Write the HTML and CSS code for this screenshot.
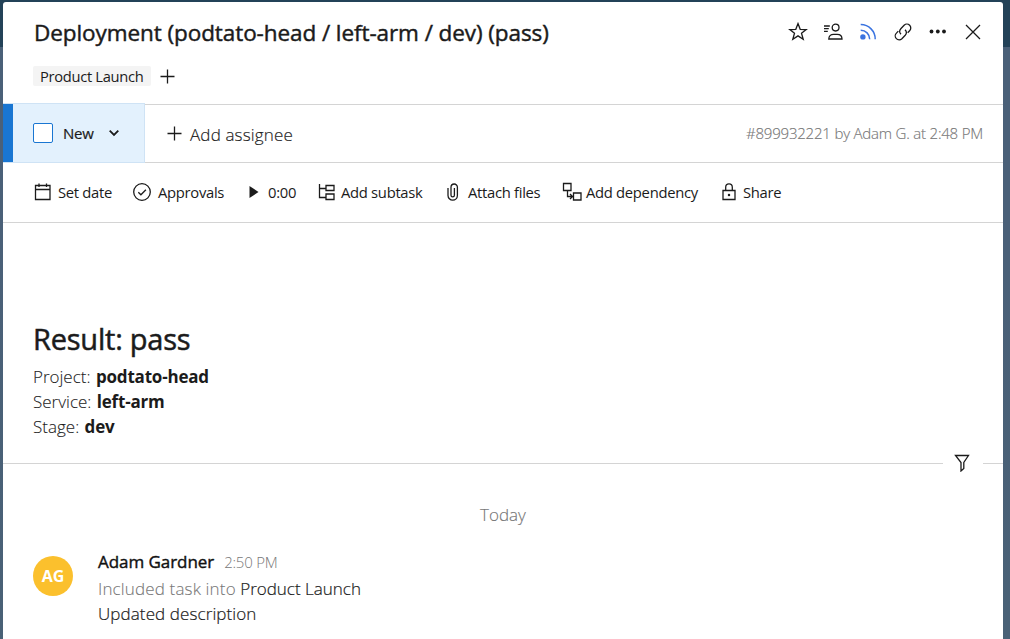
FILE: index.html
```html
<!DOCTYPE html>
<html lang="en">
<head>
<meta charset="utf-8">
<title>Deployment task</title>
<link rel="stylesheet" href="styles.css">
</head>
<body>
<main class="panel">
  <header class="header">
    <div class="title-row">
      <h1 class="title">Deployment (podtato-head / left-arm / dev) (pass)</h1>
      <div class="actions">
        <svg class="icon" width="20" height="20" viewBox="0 0 20 20"><path d="M10 1.600l2.200 5.700 6 .2-4.700 3.800 1.700 6L10 13.900l-5.200 3.400 1.700-6L1.800 7.500l6-.2z"/></svg>
        <svg class="icon" width="20" height="20" viewBox="0 0 20 20"><circle cx="12.600" cy="5.600" r="3.400"/><path d="M5.800 17c0-3 2.200-4.700 4.800-4.700h3.600c2.600 0 4.800 1.700 4.800 4.700zM1 4h5.800M1 6.700h4.800M1 9.400h3.800"/></svg>
        <svg class="icon feed" width="20" height="20" viewBox="0 0 20 20"><circle class="solid" cx="4.900" cy="14.900" r="2.700"/><path d="M2.700 2.600A14.400 14.400 0 0 1 17.200 17.300M2.700 8.200a9 9 0 0 1 9 9.100"/></svg>
        <svg class="icon" width="20" height="20" viewBox="0 0 20 20"><path d="M8 12.200a4 4 0 0 1-.2-5.500l3.300-3.500a3.900 3.900 0 0 1 5.500 5.600l-1.900 2M12 7.700a4 4 0 0 1 .2 5.500l-3.300 3.500a3.900 3.900 0 0 1-5.500-5.600l1.900-2"/></svg>
        <svg class="icon fill" width="20" height="20" viewBox="0 0 20 20"><circle cx="3.500" cy="9.500" r="1.900"/><circle cx="9.800" cy="9.500" r="1.900"/><circle cx="16" cy="9.500" r="1.900"/></svg>
        <svg class="icon" width="20" height="20" viewBox="0 0 20 20"><path d="M3 3l14 14M17 3L3 17"/></svg>
      </div>
    </div>
    <div class="tags">
      <span class="tag">Product Launch</span>
      <svg class="icon" width="16" height="16" viewBox="0 0 16 16"><path d="M7.500 1.500v14M.5 8.500h14"/></svg>
    </div>
  </header>

  <section class="status-row">
    <div class="status">
      <span class="checkbox"></span>
      <span class="status-name">New</span>
      <svg class="icon chevron" width="12" height="12" viewBox="0 0 12 12"><path d="M1.700 3.600L6 7.900l4.300-4.300"/></svg>
    </div>
    <div class="assignee">
      <svg class="icon" width="16" height="16" viewBox="0 0 16 16"><path d="M8.500 .5v14M1.500 7.500h14"/></svg>
      <span class="assignee-text">Add assignee</span>
    </div>
    <span class="meta">#899932221 by Adam G. at 2:48 PM</span>
  </section>

  <nav class="toolbar">
    <span class="tool date"><svg class="icon" width="18" height="18" viewBox="0 0 18 18"><path d="M1.500 2.500h14.500v14h-14.500zM1.500 6.500h14.500M5 .5v3.500M12.500 .5v3.500"/></svg><span>Set date</span></span>
    <span class="tool approvals"><svg class="icon" width="18" height="18" viewBox="0 0 18 18"><circle cx="9" cy="9" r="8.300"/><path d="M5.300 9.300l2.600 2.500 5-5"/></svg><span>Approvals</span></span>
    <span class="tool timer"><svg class="icon fill" width="10" height="14" viewBox="0 0 10 14"><path d="M.5 1l9 6-9 6z"/></svg><span>0:00</span></span>
    <span class="tool subtask"><svg class="icon" width="18" height="18" viewBox="0 0 18 18"><path d="M1.500 1v13.500H8M1.500 5.500H8M8 2.500h8v5H8zM8 11h8v5.500H8z"/></svg><span>Add subtask</span></span>
    <span class="tool files"><svg class="icon" width="12" height="18" viewBox="0 0 12 18"><path d="M1 5v7.500a4.700 4.700 0 0 0 9.400 0V4.200a3.200 3.200 0 0 0-6.400 0v8a1.700 1.700 0 0 0 3.400 0V5"/></svg><span>Attach files</span></span>
    <span class="tool dependency"><svg class="icon" width="20" height="20" viewBox="0 0 20 20"><path d="M1.500 1.500h7.500v7h-7.500zM11.500 11h7.500v7h-7.500zM5.500 8.500V14.500h5M8 12l2.500 2.500L8 17"/></svg><span>Add dependency</span></span>
    <span class="tool share"><svg class="icon" width="14" height="18" viewBox="0 0 14 18"><path d="M1 7.500h12v9H1zM3.700 7.500V4.200a3.300 3.300 0 0 1 6.600 0v3.300"/><circle class="solid" cx="7" cy="12" r=".6"/></svg><span>Share</span></span>
  </nav>

  <article class="description">
    <h2 class="result">Result: pass</h2>
    <p class="line">Project: <b>podtato-head</b></p>
    <p class="line">Service: <b>left-arm</b></p>
    <p class="line">Stage: <b>dev</b></p>
  </article>

  <div class="divider">
    <span class="rule"></span>
    <svg class="icon" width="16" height="18" viewBox="0 0 16 18"><path d="M1.500 1.500h13L9.800 8.500v6L7 17V8.500z"/></svg>
    <span class="rule short"></span>
  </div>

  <section class="stream">
    <div class="day">Today</div>
    <div class="entry">
      <span class="avatar">AG</span>
      <div class="entry-body">
        <div class="byline"><span class="author">Adam Gardner</span><span class="time">2:50 PM</span></div>
        <p class="event"><span class="muted">Included task into</span> <span class="strong">Product Launch</span></p>
        <p class="event"><span class="strong updated">Updated description</span></p>
      </div>
    </div>
  </section>
</main>
</body>
</html>
```
FILE: styles.css
```css
* { box-sizing: border-box; }
body {
  margin: 0;
  height: 639px;
  overflow: hidden;
  padding: 2px 7px 0 3px;
  background: linear-gradient(#234258 0 47px, #4a6078 47px 240px, #496176);
  font-family: "Open Sans", "Noto Sans", sans-serif;
  color: #1b1b1b;
  font-size: 15px;
  white-space: nowrap;
}
h1, h2, p { margin: 0; }
.panel {
  height: 637px;
  background: #fff;
  border-radius: 3px 3px 0 0;
  overflow: hidden;
}
.icon { display: block; flex: none; fill: none; stroke: #1b1b1b; stroke-width: 1.3; }
.icon.fill { fill: #1b1b1b; stroke: none; }
.solid { fill: #1b1b1b; }
.feed { stroke: #3b74e0; stroke-width: 1.5; }
.feed .solid { fill: #3b74e0; stroke: none; }

.header { height: 103px; border-bottom: 1px solid #d4d4d4; padding: 13px 20px 0 30px; }
.title-row { display: flex; justify-content: space-between; height: 36px; }
.title { font-size: 22.500px; font-weight: 400; line-height: 36px; letter-spacing: -0.08px; padding-left: 1px; -webkit-text-stroke: 0.45px #1b1b1b; }
.actions { display: flex; gap: 15px; padding-top: 7px; }
.tags { display: flex; align-items: center; gap: 9px; margin-top: 15px; height: 20px; }
.tag { background: #f4f4f4; border-radius: 2px; width: 118px; height: 20px; line-height: 20px; padding-left: 7px; letter-spacing: -0.3px; font-size: 14.700px; }

.status-row { display: flex; height: 58px; border-bottom: 1px solid #d4d4d4; align-items: center; }
.status {
  display: flex; align-items: center; height: 60px; width: 142px; margin-top: -1px;
  background: #e3f1fd; border: 1px solid #cfe3f5; border-left: 0; padding-left: 20px;
  box-shadow: inset 10px 0 #1976d2;
  padding-left: 30px;
}
.checkbox { width: 20px; height: 20px; border: 1px solid #1976d2; border-radius: 2px; background: #fff; }
.status-name { margin-left: 10px; width: 45px; -webkit-text-stroke: 0.2px #1b1b1b; letter-spacing: -0.2px; }
.chevron { stroke-width: 1.8; }
.assignee { display: flex; align-items: center; gap: 8px; margin-left: 21px; font-size: 17px; font-weight: 300; }
.assignee-text { letter-spacing: 0.15px; margin-top: 1px; -webkit-text-stroke: 0.15px #1b1b1b; }
.meta { margin: -1px 20px 0 auto; color: #777; font-weight: 300; letter-spacing: -0.2px; -webkit-text-stroke: 0.15px #777; }

.toolbar { display: flex; align-items: center; height: 60px; border-bottom: 1px solid #d4d4d4; padding: 0 0 1px 31px; }
.tool { display: flex; align-items: center; gap: 6px; flex: none; letter-spacing: -0.3px; font-size: 14.800px; }
.date { width: 99px; }
.approvals { width: 116px; gap: 7px; }
.timer { width: 69px; gap: 9px; }
.subtask { width: 129px; gap: 5px; }
.files { width: 115px; gap: 9px; }
.dependency { width: 160px; gap: 4px; }
.share { gap: 7px; }

.description { height: 231px; padding: 93px 0 0 30px; font-size: 17px; font-weight: 300; }
.result { font-size: 29px; font-weight: 400; line-height: 46px; letter-spacing: -0.22px; margin-bottom: 2px; -webkit-text-stroke: 0.5px #1b1b1b; }
.line { line-height: 25px; -webkit-text-stroke: 0.1px #1b1b1b; }
.line b { font-weight: 700; letter-spacing: -0.2px; -webkit-text-stroke: 0; margin-left: 1px; }

.divider { display: flex; align-items: center; height: 18px; }
.rule { height: 1px; background: #d4d4d4; width: 940px; margin-right: 11px; }
.rule.short { width: 20px; margin: 0 0 0 13px; }

.stream { font-size: 17px; font-weight: 300; }
.day { text-align: center; line-height: 24px; margin-top: 31px; color: #777; -webkit-text-stroke: 0.15px #777; }
.entry { display: flex; gap: 25px; padding: 21px 0 0 30px; }
.avatar { width: 40px; height: 40px; border-radius: 50%; background: #fbc02d; color: #fff; font-weight: 700; text-align: center; line-height: 40px; margin-top: 8px; font-size: 16px; }
.byline { display: flex; align-items: baseline; gap: 10px; line-height: 28px; }
.author { font-weight: 400; color: #111; letter-spacing: -0.05px; -webkit-text-stroke: 0.4px #111; }
.time { font-size: 15px; color: #777; letter-spacing: -0.25px; }
.event { line-height: 25px; }
.muted { color: #777; letter-spacing: 0.15px; -webkit-text-stroke: 0.1px #777; }
.strong { -webkit-text-stroke: 0.2px #1b1b1b; }
.updated { letter-spacing: 0.1px; }
```
